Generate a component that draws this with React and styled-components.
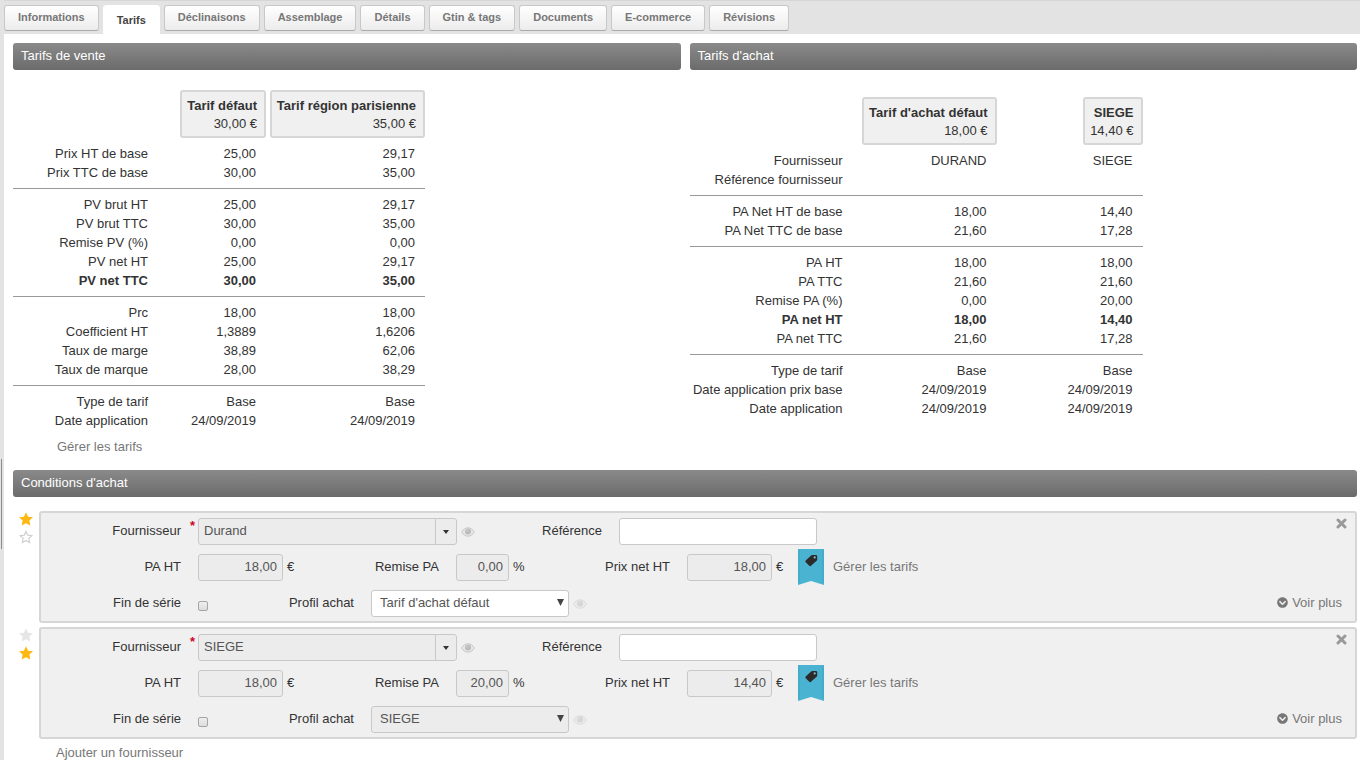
import React from 'react';
import styled, { createGlobalStyle, css } from 'styled-components';
import { FaChevronCircleDown } from 'react-icons/fa';

const GlobalStyle = createGlobalStyle`
  * {
    box-sizing: border-box;
  }

  body {
    margin: 0;
    background: #fff;
    color: #333;
    font-family: 'Liberation Sans', Arial, sans-serif;
    font-size: 13px;
    line-height: 19px;
  }

  input,
  select,
  button {
    font: inherit;
  }
`;

const Page = styled.div`
  position: relative;
  min-height: 100vh;
  border-left: 4px solid #e3e3e3;
`;

const SplitHandle = styled.div`
  position: absolute;
  top: 459px;
  left: -3px;
  width: 1px;
  height: 90px;
  background: #8c8c8c;
`;

const TabBar = styled.nav`
  display: flex;
  gap: 4px;
  height: 34px;
  padding-top: 4px;
  border-top: 1px solid #d6d6d6;
  background: #e3e3e3;
`;

const Tab = styled.button`
  height: 26px;
  padding: 0 13px 2px;
  border: 1px solid #c8c8c8;
  border-bottom-color: #aaa;
  border-radius: 3px;
  background: linear-gradient(#fff, #ececec);
  color: #777;
  font-size: 11px;
  font-weight: bold;
  line-height: 16px;
  white-space: nowrap;

  ${({ $active }) =>
    $active &&
    css`
      height: 29px;
      padding: 1px 13px 0;
      border-color: #fff;
      border-radius: 3px 3px 0 0;
      background: #fff;
      color: #444;
    `}
`;

const Content = styled.main`
  padding: 9px 3px 0 9px;
`;

const Columns = styled.div`
  display: grid;
  grid-template-columns: 1fr 1fr;
  gap: 9px;
`;

const Section = styled.section`
  min-width: 0;
`;

const SectionTitle = styled.h2`
  margin: 0;
  padding: 3px 8px 5px;
  border-radius: 3px;
  background: linear-gradient(#8a8a8a, #6b6b6b);
  color: #fff;
  font-size: 13px;
  font-weight: normal;
  line-height: 19px;
`;

const PriceTable = styled.table`
  margin-top: ${({ $top }) => $top}px;
  border-collapse: collapse;
  table-layout: fixed;
  width: 0;

  td,
  th {
    padding: 0;
    font-weight: normal;
    text-align: right;
    white-space: nowrap;
  }

  td {
    padding-right: 10px;
  }
`;

const Col = styled.col`
  width: ${({ $width }) => $width}px;
`;

const Group = styled.tbody`
  & + & tr:first-child > * {
    padding-top: 6px;
  }

  &:not(:last-child) tr:last-child > * {
    padding-bottom: 6px;
    border-bottom: 1px solid #999;
  }
`;

const Row = styled.tr`
  && > * {
    font-weight: ${({ $strong }) => ($strong ? 'bold' : 'normal')};
  }
`;

const PriceBox = styled.div`
  display: inline-block;
  margin-bottom: 6px;
  padding: 5px 7px 3px 5px;
  border: 2px solid #d6d6d6;
  border-radius: 3px;
  background: #f0f0f0;
  line-height: 18px;
  vertical-align: top;
`;

const PriceName = styled.strong`
  display: block;
`;

const Link = styled.a`
  color: #777;
  text-decoration: none;
`;

const TableFooter = styled.div`
  margin: 7px 0 14px 44px;
`;

const SupplierRow = styled.div`
  display: grid;
  grid-template-columns: 26px 1fr;
  margin-top: ${({ $first }) => ($first ? 14 : 4)}px;
`;

const Stars = styled.div`
  display: flex;
  flex-direction: column;
  align-items: center;
  gap: 4px;
  padding-top: 1px;
`;

const StarButton = styled.button`
  display: flex;
  padding: 0;
  border: 0;
  background: none;
  color: ${({ $color }) => $color};
`;

const Card = styled.div`
  position: relative;
  display: flex;
  flex-direction: column;
  gap: 9px;
  padding: 5px 13px 4px 0;
  border: 2px solid #d6d6d6;
  border-radius: 3px;
  background: #f0f0f0;
`;

const FieldRow = styled.div`
  display: flex;
  align-items: center;
  height: 27px;
`;

const Label = styled.label`
  flex: none;
  width: ${({ $width }) => $width}px;
  margin-right: 17px;
  padding-bottom: 2px;
  text-align: right;
`;

const control = css`
  height: 27px;
  border: 1px solid #c8c8c8;
  border-radius: 3px;
  background: ${({ $locked }) => ($locked ? '#ececec' : '#fff')};
  color: #555;
`;

const TextInput = styled.input`
  ${control}
  width: ${({ $width }) => $width}px;
  padding: 0 5px 2px;
  text-align: ${({ $align }) => $align || 'left'};
`;

const Combo = styled.div`
  position: relative;
  display: flex;

  input {
    border-radius: 3px 0 0 3px;
  }
`;

const Required = styled.span`
  position: absolute;
  top: 0;
  left: -8px;
  color: #d0021b;
  font-weight: bold;
  line-height: 16px;
`;

const ComboButton = styled.button`
  ${control}
  display: grid;
  place-items: center;
  width: 22px;
  margin-left: -1px;
  padding: 0;
  border-radius: 0 3px 3px 0;
`;

const SelectBox = styled.div`
  position: relative;

  svg {
    position: absolute;
    top: 9px;
    right: 5px;
    pointer-events: none;
  }
`;

const Select = styled.select`
  ${control}
  width: 198px;
  padding: 0 8px 2px;
  appearance: none;
  opacity: 1;
`;

const Checkbox = styled.input`
  width: 10px;
  height: 10px;
  margin: 4px 0 0;
  border: 1px solid #a5a5a5;
  border-radius: 2px;
  background: linear-gradient(#eee, #ddd);
  appearance: none;
`;

const Unit = styled.span`
  width: 16px;
  margin-left: 4px;
  padding-bottom: 2px;
`;

const EyeButton = styled.button`
  display: flex;
  margin-left: 4px;
  padding: 0;
  border: 0;
  background: none;
  opacity: ${({ $faint }) => ($faint ? 0.5 : 1)};
`;

const Ribbon = styled.svg`
  flex: none;
  width: 26px;
  height: 36px;
  margin: 0 9px 2px 6px;
`;

const CloseButton = styled.button`
  position: absolute;
  top: 5px;
  right: 8px;
  display: flex;
  padding: 0;
  border: 0;
  background: none;
`;

const TariffLink = styled(Link)`
  padding-bottom: 2px;
`;

const MoreLink = styled(Link)`
  display: flex;
  align-items: center;
  gap: 4px;
  margin-left: auto;
  padding-bottom: 2px;

  svg {
    font-size: 11px;
  }
`;

const CardsFooter = styled.div`
  margin: 4px 0 0 43px;
`;

const tabs = [
  'Informations',
  'Tarifs',
  'Déclinaisons',
  'Assemblage',
  'Détails',
  'Gtin & tags',
  'Documents',
  'E-commerce',
  'Révisions',
];

const salePrices = {
  columns: [135, 118, 159],
  boxes: [
    { name: 'Tarif défaut', price: '30,00 €' },
    { name: 'Tarif région parisienne', price: '35,00 €' },
  ],
  groups: [
    [
      ['Prix HT de base', '25,00', '29,17'],
      ['Prix TTC de base', '30,00', '35,00'],
    ],
    [
      ['PV brut HT', '25,00', '29,17'],
      ['PV brut TTC', '30,00', '35,00'],
      ['Remise PV (%)', '0,00', '0,00'],
      ['PV net HT', '25,00', '29,17'],
      ['PV net TTC', '30,00', '35,00'],
    ],
    [
      ['Prc', '18,00', '18,00'],
      ['Coefficient HT', '1,3889', '1,6206'],
      ['Taux de marge', '38,89', '62,06'],
      ['Taux de marque', '28,00', '38,29'],
    ],
    [
      ['Type de tarif', 'Base', 'Base'],
      ['Date application', '24/09/2019', '24/09/2019'],
    ],
  ],
  strong: 'PV net TTC',
};

const purchasePrices = {
  columns: [153, 154, 146],
  boxes: [
    { name: "Tarif d'achat défaut", price: '18,00 €' },
    { name: 'SIEGE', price: '14,40 €' },
  ],
  groups: [
    [
      ['Fournisseur', 'DURAND', 'SIEGE'],
      ['Référence fournisseur', '', ''],
    ],
    [
      ['PA Net HT de base', '18,00', '14,40'],
      ['PA Net TTC de base', '21,60', '17,28'],
    ],
    [
      ['PA HT', '18,00', '18,00'],
      ['PA TTC', '21,60', '21,60'],
      ['Remise PA (%)', '0,00', '20,00'],
      ['PA net HT', '18,00', '14,40'],
      ['PA net TTC', '21,60', '17,28'],
    ],
    [
      ['Type de tarif', 'Base', 'Base'],
      ['Date application prix base', '24/09/2019', '24/09/2019'],
      ['Date application', '24/09/2019', '24/09/2019'],
    ],
  ],
  strong: 'PA net HT',
};

const suppliers = [
  {
    id: 'durand',
    name: 'Durand',
    price: '18,00',
    discount: '0,00',
    net: '18,00',
    profile: "Tarif d'achat défaut",
    profileLocked: false,
  },
  {
    id: 'siege',
    name: 'SIEGE',
    price: '18,00',
    discount: '20,00',
    net: '14,40',
    profile: 'SIEGE',
    profileLocked: true,
  },
];

function Prices({ data, top }) {
  return (
    <PriceTable $top={top}>
      <colgroup>
        {data.columns.map((width, i) => (
          <Col key={i} $width={width} />
        ))}
      </colgroup>
      <thead>
        <tr>
          <td />
          {data.boxes.map((box) => (
            <th key={box.name} scope="col">
              <PriceBox>
                <PriceName>{box.name}</PriceName>
                {box.price}
              </PriceBox>
            </th>
          ))}
        </tr>
      </thead>
      {data.groups.map((rows) => (
        <Group key={rows[0][0]}>
          {rows.map(([label, first, second]) => (
            <Row key={label} $strong={label === data.strong}>
              <th scope="row">{label}</th>
              <td>{first}</td>
              <td>{second}</td>
            </Row>
          ))}
        </Group>
      ))}
    </PriceTable>
  );
}

function Star({ outline }) {
  return (
    <svg width="14" height="14" viewBox="0 0 14 14" aria-hidden="true">
      <path
        d={
          outline
            ? 'M7 1.4l1.7 3.7 4.2.5-3.1 2.8.8 4.1L7 10.5l-3.6 2 .8-4.1-3.1-2.8 4.2-.5z'
            : 'M7 .3l2.1 4.4 4.9.6-3.6 3.3.9 4.9L7 11.2l-4.3 2.3.9-4.9L0 5.3l4.9-.6z'
        }
        fill={outline ? 'none' : 'currentColor'}
        stroke={outline ? 'currentColor' : 'none'}
        strokeWidth="1.2"
      />
    </svg>
  );
}

function Eye() {
  return (
    <svg width="14" height="10" viewBox="0 0 14 10" aria-hidden="true">
      <path d="M.6 5C2.2 2.3 4.4.8 7 .8S11.8 2.3 13.4 5C11.800 7.7 9.600 9.200 7 9.200S2.200 7.700.600 5z" fill="#e6e6e6" stroke="#c8c8c8" />
      <circle cx="7" cy="4.600" r="3" fill="#bcbcbc" />
      <path d="M5.400 4.400Q5.500 3 7 2.800" fill="none" stroke="#e0e0e0" strokeWidth=".8" />
    </svg>
  );
}

function TagRibbon() {
  return (
    <Ribbon viewBox="0 0 26 36" aria-hidden="true">
      <path d="M0 0h26v36l-13-4-13 4z" fill="#4ab3d1" />
      <path d="M1 1v33M25 1v33" stroke="#3fa3c0" fill="none" />
      <path
        d="M14.500 6h3.500q1.200 0 1.200 1.200v3.300q0 .8-.6 1.300l-5.600 5q-.9.800-1.700 0l-3.600-3.600q-.8-.9 0-1.700l5.400-5q.6-.5 1.400-.5z"
        fill="#2b2b2b"
      />
      <circle cx="16.700" cy="8.400" r="1.100" fill="#8fb9c6" />
    </Ribbon>
  );
}

function Supplier({ supplier, first }) {
  const { id } = supplier;
  return (
    <SupplierRow $first={first}>
      <Stars>
        <StarButton type="button" aria-label="Favori" $color={first ? '#fdb913' : '#e6e6e6'}>
          <Star />
        </StarButton>
        <StarButton type="button" aria-label="Principal" $color={first ? '#d0d0d0' : '#fdb913'}>
          <Star outline={first} />
        </StarButton>
      </Stars>
      <Card>
        <CloseButton type="button" aria-label="Supprimer">
          <svg width="11" height="11" viewBox="0 0 11 11">
            <path d="M2 2l7 7M9 2L2 9" stroke="#999" strokeWidth="3" strokeLinecap="round" />
          </svg>
        </CloseButton>
        <FieldRow>
          <Label htmlFor={`${id}-name`} $width={140}>
            Fournisseur
          </Label>
          <Combo>
            <Required>*</Required>
            <TextInput id={`${id}-name`} defaultValue={supplier.name} readOnly $locked $width={238} />
            <ComboButton type="button" aria-label="Choisir" $locked>
              <svg width="6" height="4" viewBox="0 0 6 4">
                <path d="M0 0h6L3 4z" fill="#333" />
              </svg>
            </ComboButton>
          </Combo>
          <EyeButton type="button" aria-label="Voir le fournisseur">
            <Eye />
          </EyeButton>
          <Label htmlFor={`${id}-ref`} $width={127}>
            Référence
          </Label>
          <TextInput id={`${id}-ref`} $width={198} />
        </FieldRow>
        <FieldRow>
          <Label htmlFor={`${id}-price`} $width={140}>
            PA HT
          </Label>
          <TextInput id={`${id}-price`} defaultValue={supplier.price} readOnly $locked $width={85} $align="right" />
          <Unit>€</Unit>
          <Label htmlFor={`${id}-discount`} $width={136}>
            Remise PA
          </Label>
          <TextInput id={`${id}-discount`} defaultValue={supplier.discount} readOnly $locked $width={53} $align="right" />
          <Unit>%</Unit>
          <Label htmlFor={`${id}-net`} $width={141}>
            Prix net HT
          </Label>
          <TextInput id={`${id}-net`} defaultValue={supplier.net} readOnly $locked $width={85} $align="right" />
          <Unit>€</Unit>
          <TagRibbon />
          <TariffLink href="#tarifs">Gérer les tarifs</TariffLink>
        </FieldRow>
        <FieldRow>
          <Label htmlFor={`${id}-end`} $width={140}>
            Fin de série
          </Label>
          <Checkbox id={`${id}-end`} type="checkbox" />
          <Label htmlFor={`${id}-profile`} $width={146}>
            Profil achat
          </Label>
          <SelectBox>
            <Select id={`${id}-profile`} disabled={supplier.profileLocked} $locked={supplier.profileLocked}>
              <option>{supplier.profile}</option>
            </Select>
            <svg width="7" height="7" viewBox="0 0 7 7">
              <path d="M0 0h7L3.500 7z" fill="#444" />
            </svg>
          </SelectBox>
          <EyeButton type="button" aria-label="Voir le profil" $faint>
            <Eye />
          </EyeButton>
          <MoreLink href="#plus">
            <FaChevronCircleDown />
            Voir plus
          </MoreLink>
        </FieldRow>
      </Card>
    </SupplierRow>
  );
}

export default function App() {
  return (
    <Page>
      <GlobalStyle />
      <SplitHandle />
      <TabBar>
        {tabs.map((tab) => (
          <Tab key={tab} type="button" $active={tab === 'Tarifs'}>
            {tab}
          </Tab>
        ))}
      </TabBar>
      <Content>
        <Columns>
          <Section>
            <SectionTitle>Tarifs de vente</SectionTitle>
            <Prices data={salePrices} top={20} />
            <TableFooter>
              <Link href="#tarifs">Gérer les tarifs</Link>
            </TableFooter>
          </Section>
          <Section>
            <SectionTitle>Tarifs d'achat</SectionTitle>
            <Prices data={purchasePrices} top={27} />
          </Section>
        </Columns>
        <Section>
          <SectionTitle>Conditions d'achat</SectionTitle>
          {suppliers.map((supplier, i) => (
            <Supplier key={supplier.id} supplier={supplier} first={i === 0} />
          ))}
          <CardsFooter>
            <Link href="#fournisseur">Ajouter un fournisseur</Link>
          </CardsFooter>
        </Section>
      </Content>
    </Page>
  );
}
